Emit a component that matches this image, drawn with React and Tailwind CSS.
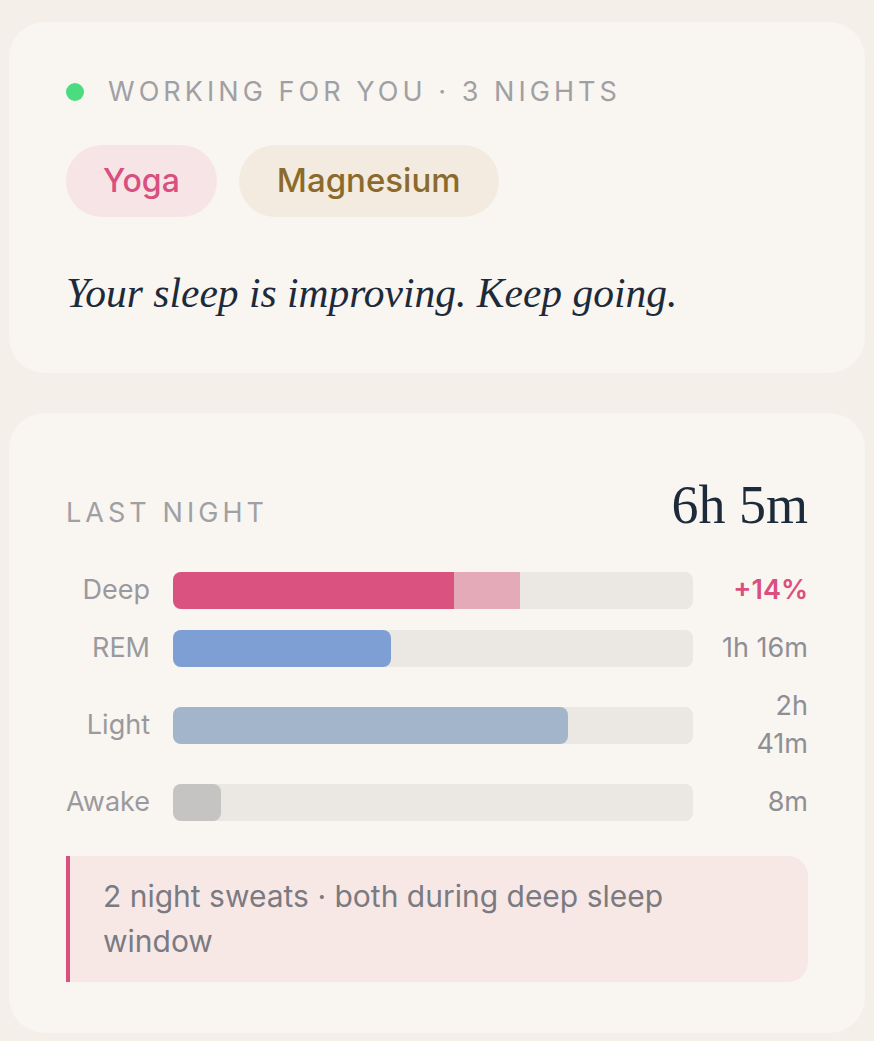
import React from "react";

const sans = { fontFamily: "Inter, 'Liberation Sans', sans-serif" };
const serif = { fontFamily: "'Liberation Serif', 'DejaVu Serif', serif" };

const stages = [
  { label: "Deep", fill: 54, extra: 12.7, color: "bg-[#d95280]", value: "+14%", accent: true },
  { label: "REM", fill: 42, color: "bg-[#7d9fd3]", value: "1h 16m" },
  { label: "Light", fill: 76, color: "bg-[#a3b5cb]", value: "2h\n41m" },
  { label: "Awake", fill: 9.2, color: "bg-[#c5c4c2]", value: "8m" },
];

const StageRow = ({ label, fill, extra, color, value, accent }) => (
  <div className="flex items-center">
    <span className="w-[84px] text-right text-[27px] leading-[38px] text-[#9a9a9e]">{label}</span>
    <div className="ml-[23px] flex h-[37px] w-[520px] overflow-hidden rounded-[8px] bg-[#ebe7e2]">
      <div className={`h-full ${extra ? "" : "rounded-r-[8px]"} ${color}`} style={{ width: `${fill}%` }} />
      {extra ? <div className="h-full bg-[#e5aab8]" style={{ width: `${extra}%` }} /> : null}
    </div>
    <span
      className={`ml-auto whitespace-pre-line text-right text-[27px] leading-[38px] ${
        accent ? "font-semibold text-[#d94f7e]" : "text-[#8e8f94]"
      }`}
    >
      {value}
    </span>
  </div>
);

const App = () => {
  return (
    <div className="min-h-screen bg-[#f4efe9] px-[9px] pt-[22px] pb-[10px]" style={sans}>
      <section className="rounded-[36px] bg-[#f9f5f0] px-[57px] pt-[56px] pb-[54px]">
        <div className="flex items-center gap-[24px]">
          <span className="h-[18px] w-[18px] rounded-full bg-[#4cdc80]" />
          <p className="text-[27px] leading-[28px] uppercase tracking-[0.15em] text-[#9fa0a4]">
            Working for you · 3 nights
          </p>
        </div>
        <div className="mt-[39px] flex gap-[22px]">
          <span className="flex h-[72px] items-center rounded-full bg-[#f7e4e6] px-[37px] text-[32px] font-medium text-[#d94f7e]">
            Yoga
          </span>
          <span className="flex h-[72px] items-center rounded-full bg-[#f3ebe0] px-[38px] text-[33px] font-medium text-[#8b6a2b]">
            Magnesium
          </span>
        </div>
        <h2 className="mt-[50px] text-[41.5px] leading-[52px] italic text-[#1c2a3a]" style={serif}>
          Your sleep is improving. Keep going.
        </h2>
      </section>

      <section className="mt-[40px] rounded-[36px] bg-[#f9f5f0] px-[57px] pt-[62px] pb-[51px]">
        <div className="flex items-end justify-between">
          <p className="mb-[8px] text-[27px] leading-[28px] uppercase tracking-[0.15em] text-[#9fa0a4]">Last night</p>
          <p className="text-[54px] leading-[60px] text-[#1c2a3a]" style={serif}>
            6h 5m
          </p>
        </div>
        <div className="mt-[36px] flex flex-col gap-[20px]">
          {stages.map((s) => (
            <StageRow key={s.label} {...s} />
          ))}
        </div>
        <div className="mt-[35px] rounded-r-[20px] border-l-[4px] border-[#d94f7e] bg-[#f8e8e5] py-[18px] pl-[33px] pr-[32px]">
          <p className="max-w-[640px] text-[30px] leading-[45px] text-[#7a7b82]">
            2 night sweats · both during deep sleep window
          </p>
        </div>
      </section>
    </div>
  );
};

export default App;
